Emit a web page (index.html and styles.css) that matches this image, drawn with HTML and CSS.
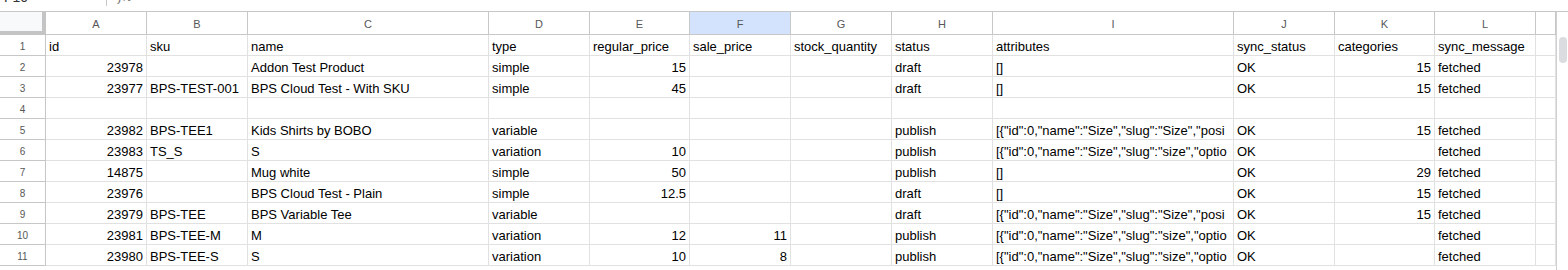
FILE: index.html
```html
<!DOCTYPE html>
<html>
<head>
<meta charset="utf-8">
<link rel="stylesheet" href="styles.css">
</head>
<body>
<div class="fbar">
  <div class="namebox">F10</div>
  <div class="nb-arrow"><svg width="8" height="6" viewBox="0 0 8 6"><path d="M0 0 L4 4 L8 0" fill="none" stroke="#666" stroke-width="1.2"/></svg></div>
  <div class="fsep"></div>
  <div class="fx">fx</div>
</div>
<div class="wrap">
  <div class="sheet">
    <div class="corner"></div>
    <div class="ch">A</div><div class="ch">B</div><div class="ch">C</div><div class="ch">D</div><div class="ch">E</div><div class="ch sel">F</div><div class="ch">G</div><div class="ch">H</div><div class="ch">I</div><div class="ch">J</div><div class="ch">K</div><div class="ch">L</div><div class="ch"></div>

    <div class="rh">1</div>
    <div class="c">id</div><div class="c">sku</div><div class="c">name</div><div class="c">type</div><div class="c">regular_price</div><div class="c">sale_price</div><div class="c">stock_quantity</div><div class="c">status</div><div class="c">attributes</div><div class="c">sync_status</div><div class="c">categories</div><div class="c">sync_message</div><div class="c"></div>

    <div class="rh">2</div>
    <div class="c n">23978</div><div class="c"></div><div class="c">Addon Test Product</div><div class="c">simple</div><div class="c n">15</div><div class="c"></div><div class="c"></div><div class="c">draft</div><div class="c">[]</div><div class="c">OK</div><div class="c n">15</div><div class="c">fetched</div><div class="c"></div>

    <div class="rh">3</div>
    <div class="c n">23977</div><div class="c">BPS-TEST-001</div><div class="c">BPS Cloud Test - With SKU</div><div class="c">simple</div><div class="c n">45</div><div class="c"></div><div class="c"></div><div class="c">draft</div><div class="c">[]</div><div class="c">OK</div><div class="c n">15</div><div class="c">fetched</div><div class="c"></div>

    <div class="rh">4</div>
    <div class="c"></div><div class="c"></div><div class="c"></div><div class="c"></div><div class="c"></div><div class="c"></div><div class="c"></div><div class="c"></div><div class="c"></div><div class="c"></div><div class="c"></div><div class="c"></div><div class="c"></div>

    <div class="rh">5</div>
    <div class="c n">23982</div><div class="c">BPS-TEE1</div><div class="c">Kids Shirts by BOBO</div><div class="c">variable</div><div class="c"></div><div class="c"></div><div class="c"></div><div class="c">publish</div><div class="c">[{"id":0,"name":"Size","slug":"Size","posi</div><div class="c">OK</div><div class="c n">15</div><div class="c">fetched</div><div class="c"></div>

    <div class="rh">6</div>
    <div class="c n">23983</div><div class="c">TS_S</div><div class="c">S</div><div class="c">variation</div><div class="c n">10</div><div class="c"></div><div class="c"></div><div class="c">publish</div><div class="c">[{"id":0,"name":"Size","slug":"size","optio</div><div class="c">OK</div><div class="c"></div><div class="c">fetched</div><div class="c"></div>

    <div class="rh">7</div>
    <div class="c n">14875</div><div class="c"></div><div class="c">Mug white</div><div class="c">simple</div><div class="c n">50</div><div class="c"></div><div class="c"></div><div class="c">publish</div><div class="c">[]</div><div class="c">OK</div><div class="c n">29</div><div class="c">fetched</div><div class="c"></div>

    <div class="rh">8</div>
    <div class="c n">23976</div><div class="c"></div><div class="c">BPS Cloud Test - Plain</div><div class="c">simple</div><div class="c n">12.5</div><div class="c"></div><div class="c"></div><div class="c">draft</div><div class="c">[]</div><div class="c">OK</div><div class="c n">15</div><div class="c">fetched</div><div class="c"></div>

    <div class="rh">9</div>
    <div class="c n">23979</div><div class="c">BPS-TEE</div><div class="c">BPS Variable Tee</div><div class="c">variable</div><div class="c"></div><div class="c"></div><div class="c"></div><div class="c">draft</div><div class="c">[{"id":0,"name":"Size","slug":"Size","posi</div><div class="c">OK</div><div class="c n">15</div><div class="c">fetched</div><div class="c"></div>

    <div class="rh">10</div>
    <div class="c n">23981</div><div class="c">BPS-TEE-M</div><div class="c">M</div><div class="c">variation</div><div class="c n">12</div><div class="c n">11</div><div class="c"></div><div class="c">publish</div><div class="c">[{"id":0,"name":"Size","slug":"size","optio</div><div class="c">OK</div><div class="c"></div><div class="c">fetched</div><div class="c"></div>

    <div class="rh">11</div>
    <div class="c n">23980</div><div class="c">BPS-TEE-S</div><div class="c">S</div><div class="c">variation</div><div class="c n">10</div><div class="c n">8</div><div class="c"></div><div class="c">publish</div><div class="c">[{"id":0,"name":"Size","slug":"size","optio</div><div class="c">OK</div><div class="c"></div><div class="c">fetched</div><div class="c"></div>
  </div>
  <div class="vscroll"><div class="thumb"></div></div>
</div>
</body>
</html>
```
FILE: styles.css
```css
* { box-sizing: border-box; }
html, body { margin: 0; padding: 0; background: #fff; overflow: hidden; }
body { font-family: "Liberation Sans", Arial, sans-serif; width: 1568px; height: 270px; }

.fbar {
  height: 12px;
  border-bottom: 1px solid #c7c7c7;
  display: flex;
  align-items: flex-start;
  overflow: hidden;
}
.namebox {
  width: 86px;
  margin-top: -11px;
  padding-left: 4px;
  font-size: 14px;
  line-height: 16px;
  color: #333;
}
.nb-arrow { margin-top: -4px; width: 18px; height: 4px; overflow: hidden; }
.fsep { width: 1px; height: 6px; background: #c7c7c7; margin-left: 2px; }
.fx {
  margin-left: 11px;
  margin-top: -12px;
  font-family: "DejaVu Serif", serif;
  font-style: italic;
  font-size: 14px;
  line-height: 16px;
  color: #777;
}

.wrap { display: flex; }
.sheet {
  display: grid;
  grid-template-columns: 46px 101px 101px 241px 101px 100px 101px 101px 101px 241px 101px 100px 101px 20px;
  grid-auto-rows: 21px;
  grid-template-rows: 23px;
  width: 1556px;
  height: 258px;
  overflow: hidden;
}
.corner {
  background: #f8f9fa;
  border-right: 4px solid #c4c4c4;
  border-bottom: 4px solid #c4c4c4;
}
.ch {
  border-right: 1px solid #c7c7c7;
  border-bottom: 1px solid #c7c7c7;
  font-size: 11px;
  color: #575757;
  text-align: center;
  line-height: 22px;
  padding-top: 1px;
}
.ch.sel { background: #d3e3fd; }
.rh {
  border-right: 1px solid #c7c7c7;
  border-bottom: 1px solid #c7c7c7;
  font-size: 10px;
  color: #575757;
  text-align: center;
  line-height: 19px;
  padding-top: 2px;
}
.c {
  border-right: 1px solid #e1e1e1;
  border-bottom: 1px solid #e1e1e1;
  font-size: 13px;
  color: #000;
  line-height: 19px;
  padding: 2px 3px 0;
  white-space: nowrap;
  overflow: hidden;
}
.c.n { text-align: right; }

.vscroll {
  width: 12px;
  border-left: 1px solid #d0d0d0;
  padding-top: 25px;
  height: 258px;
}
.thumb {
  width: 8px;
  height: 26px;
  margin-left: 2px;
  background: #dadce0;
  border-radius: 4px;
}
```
